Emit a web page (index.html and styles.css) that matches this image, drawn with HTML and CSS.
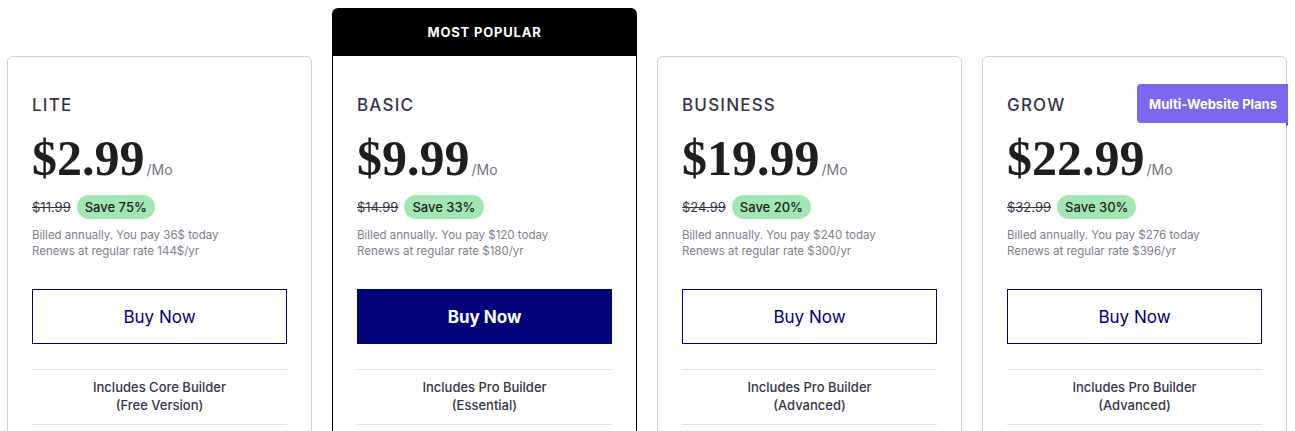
FILE: index.html
```html
<!DOCTYPE html>
<html lang="en">

<head>
    <meta charset="UTF-8">
    <meta name="viewport" content="width=device-width, initial-scale=1.0">
    <title>Pricing plans</title>

    <link rel="stylesheet" href="styles.css">

</head>

<body>
    <div class="plans">

        <div class="plan">
            <div class="plan-body">
                <h3 class="plan-name">LITE</h3>
                <div class="price">$2.99<span class="per">/Mo</span></div>
                <div class="discount">
                    <s class="old-price">$11.99</s>
                    <span class="save">Save 75%</span>
                </div>
                <p class="billing">Billed annually. You pay 36$ today<br>Renews at regular rate 144$/yr</p>
                <a class="buy" href="#">Buy Now</a>
                <div class="feature">Includes Core Builder<br>(Free Version)</div>
            </div>
        </div>

        <div class="plan plan-popular">
            <div class="flag">MOST POPULAR</div>
            <div class="plan-body">
                <h3 class="plan-name">BASIC</h3>
                <div class="price">$9.99<span class="per">/Mo</span></div>
                <div class="discount">
                    <s class="old-price">$14.99</s>
                    <span class="save">Save 33%</span>
                </div>
                <p class="billing">Billed annually. You pay $120 today<br>Renews at regular rate $180/yr</p>
                <a class="buy buy-filled" href="#">Buy Now</a>
                <div class="feature">Includes Pro Builder<br>(Essential)</div>
            </div>
        </div>

        <div class="plan">
            <div class="plan-body">
                <h3 class="plan-name">BUSINESS</h3>
                <div class="price">$19.99<span class="per">/Mo</span></div>
                <div class="discount">
                    <s class="old-price">$24.99</s>
                    <span class="save">Save 20%</span>
                </div>
                <p class="billing">Billed annually. You pay $240 today<br>Renews at regular rate $300/yr</p>
                <a class="buy" href="#">Buy Now</a>
                <div class="feature">Includes Pro Builder<br>(Advanced)</div>
            </div>
        </div>

        <div class="plan">
            <div class="plan-body">
                <span class="ribbon">Multi-Website Plans</span>
                <h3 class="plan-name">GROW</h3>
                <div class="price">$22.99<span class="per">/Mo</span></div>
                <div class="discount">
                    <s class="old-price">$32.99</s>
                    <span class="save">Save 30%</span>
                </div>
                <p class="billing">Billed annually. You pay $276 today<br>Renews at regular rate $396/yr</p>
                <a class="buy" href="#">Buy Now</a>
                <div class="feature">Includes Pro Builder<br>(Advanced)</div>
            </div>
        </div>

    </div>
</body>

</html>
```

FILE: styles.css
```css
* {
    box-sizing: border-box;
    font-family: Inter, "Liberation Sans", sans-serif;
}

body {
    margin: 8px 7px;
    background: #fff;
    color: #36344d;
}

.plans {
    display: grid;
    grid-template-columns: repeat(4, 305px);
    gap: 20px;
    align-items: start;
}

.plan {
    margin-top: 48px;
}

.plan-popular {
    margin-top: 0;
}

.plan-body {
    position: relative;
    border: 1px solid #d0d0d0;
    border-radius: 6px;
    padding: 36px 24px 0;
    height: 400px;
}

.plan-popular .plan-body {
    border-color: #000;
    border-top: none;
    border-radius: 0;
    padding-top: 37px;
}

.flag {
    height: 48px;
    background: #000;
    color: #fff;
    border-radius: 6px 6px 0 0;
    font-size: 13px;
    font-weight: 700;
    letter-spacing: 0.8px;
    display: flex;
    align-items: center;
    justify-content: center;
}

.plan-name {
    margin: 0;
    font-size: 17px;
    line-height: 24px;
    font-weight: 500;
    letter-spacing: 1.2px;
    color: #36344d;
}

.price {
    margin-top: 16px;
    font-family: "Liberation Serif", serif;
    font-weight: 700;
    font-size: 50px;
    line-height: 50px;
    color: #1d1e20;
}

.per {
    font-family: Inter, "Liberation Sans", sans-serif;
    font-size: 14px;
    line-height: 0;
    font-weight: 400;
    color: #727586;
    margin-left: 2px;
}

.discount {
    margin-top: 12px;
    display: flex;
    align-items: center;
    gap: 6px;
}

.old-price {
    font-size: 13px;
    color: #36344d;
}

.save {
    background: #a2e6b4;
    color: #1d1e20;
    border-radius: 12px;
    height: 24px;
    line-height: 24px;
    padding: 0 8px;
    font-size: 13px;
    font-weight: 500;
}

.billing {
    margin: 8px 0 0;
    font-size: 11.5px;
    line-height: 16px;
    color: #7d8090;
}

.buy {
    display: flex;
    align-items: center;
    justify-content: center;
    margin-top: 30px;
    height: 55px;
    border: 1px solid #00007f;
    color: #00007f;
    font-size: 17px;
    text-decoration: none;
}

.buy-filled {
    background: #02027a;
    border-color: #02027a;
    color: #fff;
    font-weight: 700;
}

.feature {
    margin-top: 25px;
    border-top: 1px solid #e2e2e2;
    border-bottom: 1px solid #e2e2e2;
    padding: 8px 0 10px;
    text-align: center;
    font-size: 13px;
    line-height: 18px;
    font-weight: 500;
    color: #36344d;
}

.ribbon {
    position: absolute;
    top: 27px;
    right: -3px;
    height: 39px;
    padding: 0 12px;
    display: flex;
    align-items: center;
    background: #7b68ee;
    color: #fff;
    font-size: 13px;
    font-weight: 700;
    border-radius: 4px 0 0 4px;
}

.ribbon::after {
    content: "";
    position: absolute;
    right: 0;
    bottom: -4px;
    border-top: 4px solid #5a4bc4;
    border-right: 3px solid transparent;
}
```
